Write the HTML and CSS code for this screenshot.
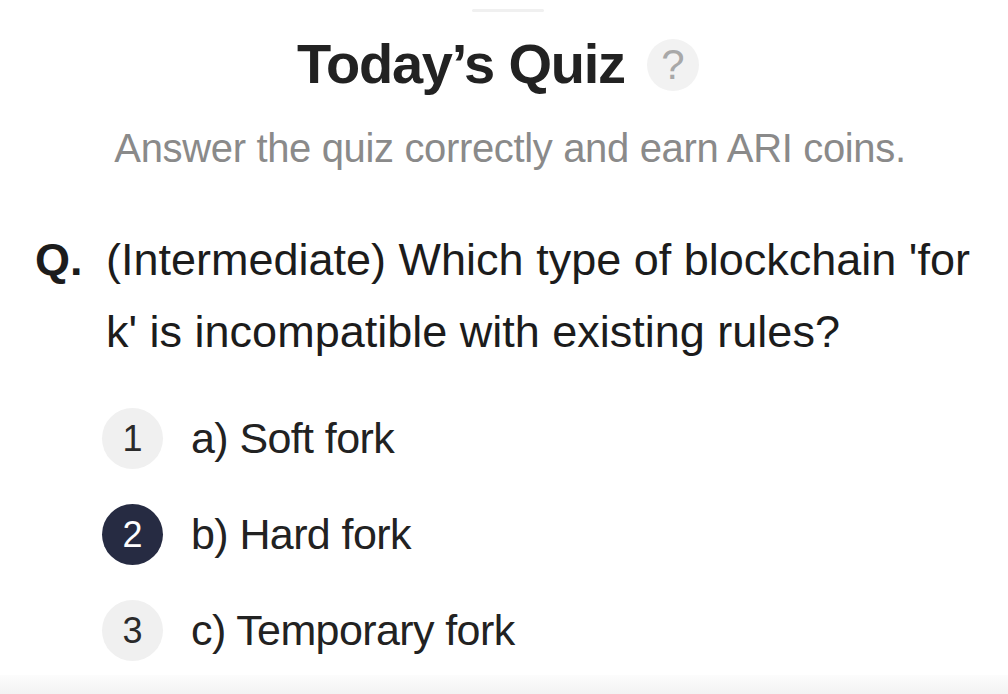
FILE: index.html
```html
<!DOCTYPE html>
<html lang="en">
<head>
<meta charset="utf-8">
<title>Today's Quiz</title>
<link rel="stylesheet" href="styles.css">
</head>
<body>
<div class="sheet">
  <div class="handle"></div>
  <div class="title-row">
    <h1 class="title">Today’s Quiz</h1>
    <span class="help">?</span>
  </div>
  <p class="subtitle">Answer the quiz correctly and earn ARI coins.</p>
  <div class="question">
    <span class="q-mark">Q.</span>
    <p class="q-text">(Intermediate) Which type of blockchain 'for<br>k' is incompatible with existing rules?</p>
  </div>
  <ul class="options">
    <li class="option"><span class="num">1</span><span class="label">a) Soft fork</span></li>
    <li class="option selected"><span class="num">2</span><span class="label">b) Hard fork</span></li>
    <li class="option"><span class="num">3</span><span class="label">c) Temporary fork</span></li>
  </ul>
  <div class="footer-band"></div>
</div>
</body>
</html>
```
FILE: styles.css
```css
html, body {
  margin: 0;
  padding: 0;
  background: #ffffff;
}
body {
  font-family: "Liberation Sans", Arial, sans-serif;
  color: #1c1c1c;
  height: 694px;
  overflow: hidden;
}
.sheet {
  height: 694px;
  display: flex;
  flex-direction: column;
  padding-top: 9px;
  box-sizing: border-box;
}
.handle {
  width: 72px;
  height: 3px;
  border-radius: 2px;
  background: #f0f0f0;
  margin: 0 auto;
  transform: translateX(4px);
}
.title-row {
  display: flex;
  justify-content: center;
  align-items: center;
  gap: 22px;
  margin-top: 24px;
  padding-right: 12px;
}
.title {
  margin: 0;
  font-size: 56px;
  line-height: 1;
  font-weight: 700;
  color: #222222;
  letter-spacing: -1.2px;
}
.help {
  width: 52px;
  height: 52px;
  border-radius: 50%;
  background: #f2f2f2;
  color: #a8a8a8;
  font-size: 42px;
  display: flex;
  align-items: center;
  justify-content: center;
  margin-top: 2px;
}
.subtitle {
  margin: 34px 0 0;
  text-align: center;
  font-size: 40px;
  line-height: 44px;
  color: #8a8a8a;
  letter-spacing: -0.35px;
  padding-left: 12px;
}
.question {
  display: flex;
  margin-top: 54px;
  padding-left: 35px;
}
.q-mark {
  width: 71px;
  flex: none;
  font-size: 45px;
  line-height: 72px;
  font-weight: 700;
  color: #1c1c1c;
}
.q-text {
  margin: 0;
  font-size: 45px;
  line-height: 72px;
  color: #1c1c1c;
  letter-spacing: 0;
}
.options {
  list-style: none;
  margin: 40px 0 0;
  padding: 0 0 0 102px;
  display: flex;
  flex-direction: column;
  gap: 35px;
}
.option {
  display: flex;
  align-items: center;
  gap: 28px;
  height: 61px;
}
.num {
  width: 61px;
  height: 61px;
  border-radius: 50%;
  background: #f0f0f0;
  color: #2a2a2a;
  font-size: 36px;
  display: flex;
  align-items: center;
  justify-content: center;
  flex: none;
}
.option.selected .num {
  background: #262b42;
  color: #ffffff;
}
.label {
  font-size: 43px;
  color: #222222;
  letter-spacing: -0.6px;
}
.footer-band {
  margin-top: auto;
  height: 19px;
  background: linear-gradient(#fcfcfc, #f3f3f3);
}
```
